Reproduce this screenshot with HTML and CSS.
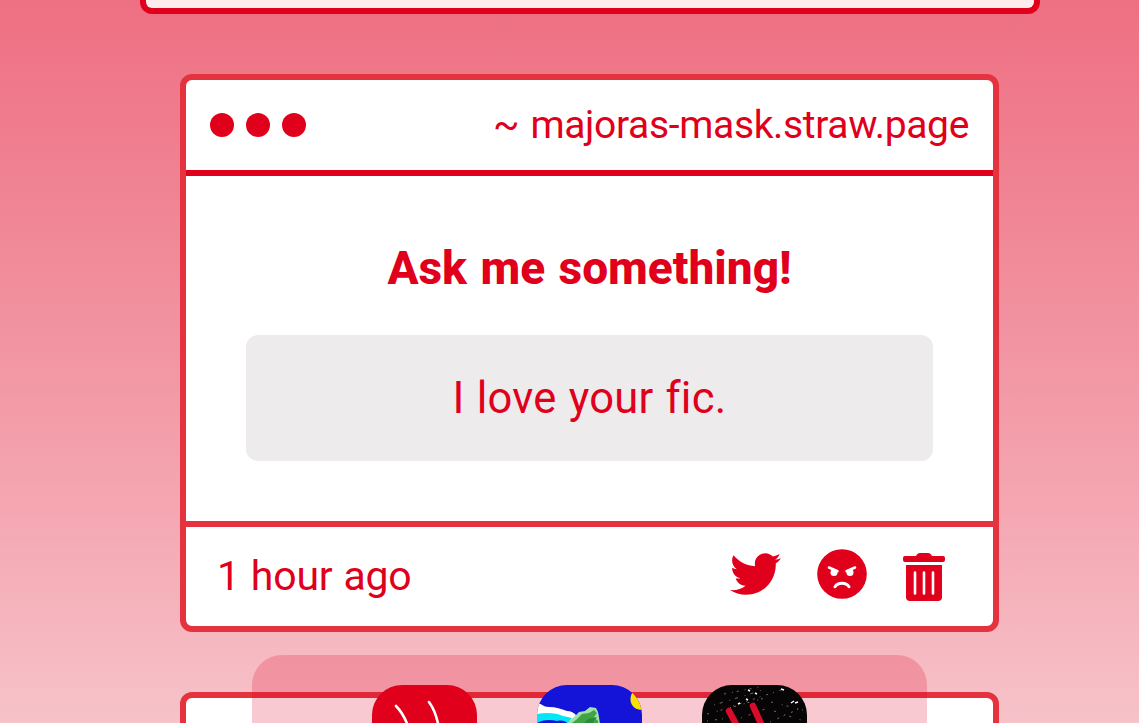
FILE: index.html
```html
<!DOCTYPE html>
<html lang="en">
<head>
    <meta charset="UTF-8">
    <meta name="viewport" content="width=device-width, initial-scale=1.0">
    <title>majoras-mask.straw.page</title>
    <link rel="stylesheet" href="styles.css">
</head>
<body>
    <div class="page">
        <div class="panel"></div>
        <div class="card">
            <div class="card__header">
                <div class="dots">
                    <span class="dots__item"></span>
                    <span class="dots__item"></span>
                    <span class="dots__item"></span>
                </div>
                <div class="card__site">~ majoras-mask.straw.page</div>
            </div>
            <div class="card__body">
                <h2 class="card__title">Ask me something!</h2>
                <div class="card__message">I love your fic.</div>
            </div>
            <div class="card__footer">
                <span class="card__time">1 hour ago</span>
                <div class="actions">
                    <svg class="actions__bird" viewBox="0 48 512 416">
                        <path d="M459.37 151.716c.325 4.548.325 9.097.325 13.645 0 138.72-105.583 298.558-298.558 298.558-59.452 0-114.68-17.219-161.137-47.106 8.447.974 16.568 1.299 25.34 1.299 49.055 0 94.213-16.568 130.274-44.832-46.132-.975-84.792-31.188-98.112-72.772 6.498.974 12.995 1.624 19.818 1.624 9.421 0 18.843-1.3 27.614-3.573-48.081-9.747-84.143-51.98-84.143-102.985v-1.299c13.969 7.797 30.214 12.67 47.431 13.319-28.264-18.843-46.781-51.005-46.781-87.391 0-19.492 5.197-37.36 14.294-52.954 51.655 63.675 129.3 105.258 216.365 109.807-1.624-7.797-2.599-15.918-2.599-24.04 0-57.828 46.782-104.934 104.934-104.934 30.213 0 57.502 12.67 76.67 33.137 23.715-4.548 46.456-13.32 66.599-25.34-7.798 24.366-24.366 44.833-46.132 57.827 21.117-2.273 41.584-8.122 60.426-16.243-14.292 20.791-32.161 39.308-52.628 54.253z"/>
                    </svg>
                    <svg class="actions__angry" viewBox="0 0 50 50">
                        <circle cx="25" cy="25" r="24.8"/>
                        <g class="face">
                            <path d="M12 18.5l8.5 3.7M38 18.5l-8.5 3.7"/>
                            <path class="face__mouth" d="M18 37.7c3-4.6 11-4.6 14 0"/>
                        </g>
                        <circle class="face__eye" cx="17" cy="23.5" r="3.5"/>
                        <circle class="face__eye" cx="33" cy="23.5" r="3.5"/>
                    </svg>
                    <svg class="actions__trash" viewBox="0 0 42 48">
                        <path d="M2 3h11c1-2 2-3 4-3h8c2 0 3 1 4 3h11q2 0 2 2v2q0 2-2 2H2q-2 0-2-2V5q0-2 2-2z"/>
                        <path d="M3 12h36v32q0 4-4 4H7q-4 0-4-4z"/>
                        <path class="slots" d="M12 19.5v21M21 19.5v21M30 19.5v21"/>
                    </svg>
                </div>
            </div>
        </div>
        <div class="card">
            <div class="card__header"></div>
        </div>
    </div>
    <div class="dock">
        <svg class="dock__item" viewBox="0 0 105 105">
            <rect width="105" height="105" fill="#e0001b"/>
            <path d="M24 21c6 6 11 15 15 29M57 17c6 8 9 17 11 33" fill="none" stroke="#fff" stroke-width="2.6" stroke-linecap="round"/>
        </svg>
        <svg class="dock__item" viewBox="0 0 105 105">
            <rect width="105" height="105" fill="#1414d8"/>
            <path d="M0 18c4 0 6 4 12 4 7 0 12 2 18 4 4 0 7 2 9 4l-4 9H0z" fill="#fff"/>
            <path d="M0 29c10-2 20-1 26 2l9 2-4 5H18l-6-2-12 2z" fill="#00e8f8"/>
            <path d="M0 38c8-4 14-3 20-2 5-1 9 0 10 2v10H0z" fill="#1414d8"/>
            <path d="M29 39l8-7 5-5 6-1 5-4 6 1 2 4 1 5 1 7v6H28z" fill="#9be3a8"/>
            <path d="M32 40l7-5 6-6 7-1 5-3 3 3-3 4 4 4v10H30z" fill="#42a344"/>
            <path d="M44 42l7-8 9-2-4 5 5 5z" fill="#2d8a3c"/>
            <path d="M95 8c-4 8 0 17 10 17V8z" fill="#ffe000"/>
        </svg>
        <svg class="dock__item" viewBox="0 0 105 105">
            <rect width="105" height="105" fill="#080506"/>
            <g fill="none" stroke="#8f8a8b" stroke-width="0.8">
                <path d="M22 9l35-7" stroke-dasharray="2 6 1 4"/>
                <path d="M12 20l49-15" stroke-dasharray="1 5 3 7"/>
                <path d="M5 29l58-16" stroke-dasharray="2 8 1 3"/>
                <path d="M31 21l51-17" stroke-dasharray="1 6 2 5"/>
                <path d="M5 36l28-4M39 33l24-9M68 37l31-14" stroke-dasharray="1 7 2 5"/>
                <path d="M69 17l32 8M72 26l27 9" stroke-dasharray="2 9 1 4"/>
            </g>
            <path d="M53 8l2 1M44 14l2 1M36 19l2-1M79 4l3 1M89 18l3-2M93 18l3-1M46 5l2 1" stroke="#fff" stroke-width="1.5"/>
            <path d="M27 26l8 15M51 21l9 20" fill="none" stroke="#d90b2b" stroke-width="6.5" stroke-linecap="round"/>
        </svg>
    </div>
</body>
</html>
```
FILE: styles.css
```css
:root {
    --red: #e0001b;
    --borderRed: #e4323e;
}
html,
body {
    height: 100%;
}
body {
    margin: 0;
    overflow: hidden;
    background: linear-gradient(#ee7082 0, #f08494 200px, #f4a6b1 500px, #f7c2c9 723px);
    color: var(--red);
    font-family: Roboto, "Liberation Sans", sans-serif;
}

.page {
    width: 900px;
    height: 100%;
    margin-left: 140px;
    overflow: hidden;
}

.panel {
    box-sizing: border-box;
    height: 14px;
    border: 6px solid var(--red);
    border-top: 0;
    border-radius: 0 0 12px 12px;
    background-color: #fdebed;
}

.card {
    box-sizing: border-box;
    width: 819px;
    margin: 60px 0 0 40px;
    border: 6px solid var(--borderRed);
    border-radius: 12px;
    background-color: #fff;
}

.card__header {
    display: flex;
    align-items: center;
    justify-content: space-between;
    height: 90px;
    padding: 0 24px;
    border-bottom: 6px solid var(--red);
}

.dots {
    display: flex;
    gap: 12px;
}

.dots__item {
    width: 24px;
    height: 24px;
    border-radius: 50%;
    background-color: var(--red);
}

.card__site {
    font-size: 39px;
    line-height: 46px;
    letter-spacing: -0.35px;
    word-spacing: 2px;
    white-space: nowrap;
}

.card__body {
    box-sizing: border-box;
    height: 345px;
    padding: 64px 60px 0;
    text-align: center;
}

.card__title {
    margin: 0 0 39px;
    font-size: 46px;
    font-weight: 800;
    line-height: 56px;
    word-spacing: 2px;
}

.card__message {
    box-sizing: border-box;
    height: 126px;
    padding-top: 1px;
    border-radius: 12px;
    background-color: #edebec;
    font-size: 43.5px;
    line-height: 126px;
    letter-spacing: 0.25px;
    word-spacing: 1px;
}

.card__footer {
    display: flex;
    align-items: center;
    justify-content: space-between;
    height: 99px;
    padding: 0 48px 0 31px;
    border-top: 6px solid var(--borderRed);
}

.card__time {
    font-size: 41px;
    line-height: 48px;
    letter-spacing: -0.2px;
    word-spacing: 1px;
    padding-bottom: 1px;
}

.actions {
    display: flex;
    align-items: center;
    fill: var(--red);
}

.actions__bird {
    width: 51px;
    height: 42px;
    margin-right: 36px;
    margin-bottom: 6px;
}

.actions__angry {
    width: 50px;
    height: 50px;
    margin-right: 36px;
    margin-bottom: 6px;
}

.actions__trash {
    width: 42px;
    height: 48px;
}

.face,
.slots {
    fill: none;
    stroke: #fff;
    stroke-width: 2.6;
    stroke-linecap: round;
}

.face__mouth {
    stroke-width: 3;
}

.face__eye {
    fill: #fff;
}

.dock {
    position: fixed;
    top: 655px;
    bottom: 0;
    left: 252px;
    display: flex;
    justify-content: center;
    gap: 60px;
    box-sizing: border-box;
    width: 675px;
    padding-top: 30px;
    border-radius: 30px 30px 0 0;
    background-color: rgba(224, 0, 40, 0.21);
    overflow: hidden;
}

.dock__item {
    flex: none;
    width: 105px;
    height: 105px;
    border-radius: 30px;
}
```
